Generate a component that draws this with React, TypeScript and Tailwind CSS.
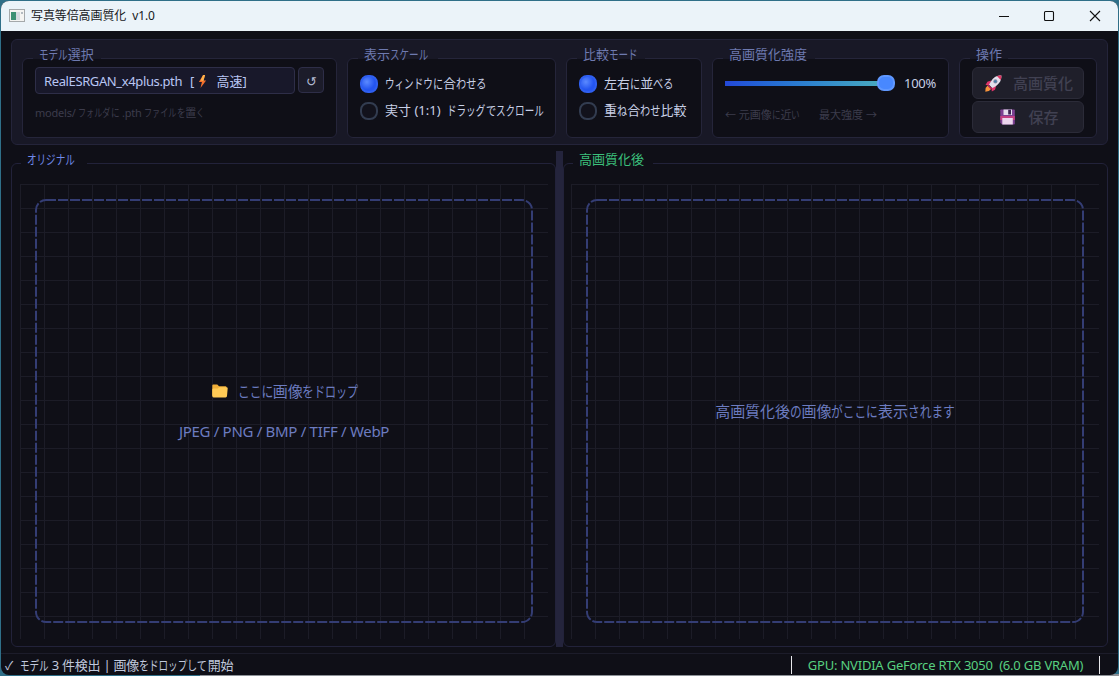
import type { ReactNode } from "react";

interface GroupProps {
  title: string;
  className: string;
  titleClassName: string;
  children: ReactNode;
}

// Kana are set narrower than kanji, as in the UI fonts of the desktop.
function Jp({ text }: { text: string }) {
  const runs = text.match(/[\u3040-\u309f]+|[\u30a0-\u30ff]+|[^\u3040-\u30ff]+/g) ?? [];
  return (
    <span className="whitespace-pre">
      {runs.map((run, i) => {
        const katakana = /^[\u30a0-\u30ff]/.test(run);
        if (!katakana && !/^[\u3040-\u309f]/.test(run)) {
          return <span key={i}>{run}</span>;
        }
        const ratio = katakana ? 0.735 : 0.78;
        return (
          <span key={i} className="inline-block" style={{ width: `${run.length * ratio}em` }}>
            <span className="inline-block origin-left tracking-normal" style={{ transform: `scaleX(${ratio})` }}>
              {run}
            </span>
          </span>
        );
      })}
    </span>
  );
}

function ToolGroup({ title, className, titleClassName, children }: GroupProps) {
  return (
    <div className={`relative h-[80px] shrink-0 rounded-md border border-[#25253a] bg-[#0f0f17] ${className}`}>
      <span
        className={`absolute -top-[14px] left-[10px] h-[20px] whitespace-nowrap bg-linear-to-b from-[#181826] from-70% to-[#0f0f17] to-70% pl-[6px] text-[13px] leading-[19px] text-[#6e7ab0] ${titleClassName}`}
      >
        <Jp text={title} />
      </span>
      {children}
    </div>
  );
}

function RadioRow({ label, checked }: { label: string; checked?: boolean }) {
  return (
    <div className="flex h-[18px] items-center gap-[7px]">
      <span
        className={`h-[18px] w-[18px] shrink-0 rounded-[8px] border-2 ${
          checked
            ? "border-[#2f5ff0] bg-radial-[at_35%_35%] from-[#5b8aff] to-[#2455f0] to-60%"
            : "border-[#323c50] bg-[#12121c]"
        }`}
      />
      <span className="whitespace-nowrap text-[13px] text-[#c8d0e6]">
        <Jp text={label} />
      </span>
    </div>
  );
}

function AppIcon() {
  return (
    <svg width="16" height="14" viewBox="0 0 16 14">
      <rect x="0.5" y="0.5" width="15" height="12" fill="#f4f4f2" stroke="#a5a9ab" />
      <rect x="2" y="3" width="5" height="8" fill="#3d9174" />
      <rect x="7" y="3" width="4" height="8" fill="#d5dbe0" />
      <rect x="12" y="3" width="2" height="2" fill="#b3bac0" />
    </svg>
  );
}

function BoltIcon() {
  return (
    <svg width="9" height="13" viewBox="0 0 8 13" className="ml-[4px] shrink-0">
      <path d="M4.6 0 0.4 7h3L2 13l5.6-7.6H4.7L6.6 0Z" fill="#f4702c" />
      <path d="M4.6 0 2 5.5l3 .4L6.6 0Z" fill="#ffb14a" />
    </svg>
  );
}

function RocketIcon() {
  return (
    <svg width="17" height="17" viewBox="0 0 17 17">
      <path d="M6.2 5.6 2.4 6.8.5 10l4 .2Z" fill="#e0346b" />
      <path d="M11.2 10.7 10 14.8 6.8 16.4l-.2-4Z" fill="#e0346b" />
      <path d="M2.7 10.6.6 13.1.3 16.7l3.6-.6 2.5-2.3Z" fill="#f7933b" />
      <path d="M16.4.5C11 .4 7.4 2.6 4 9.8l3.2 3.3C13.6 10 16.6 6.4 16.4.5Z" fill="#e3dfeb" />
      <path d="M16.4.5c-2-.1-3.3.1-4.5.6l3.8 3.8c.5-1.3.7-2.6.7-4.4Z" fill="#df3864" />
      <path d="m3.5 9.8 3.7 3.7-1.2.9-3.3-3.3Z" fill="#b5255b" />
      <circle cx="10.4" cy="6.4" r="2.1" fill="#8a8aa5" />
      <circle cx="10.4" cy="6.4" r="1.2" fill="#3f80ac" />
    </svg>
  );
}

function FloppyIcon() {
  return (
    <svg width="15" height="16" viewBox="0 0 15 16">
      <path d="M1 .5h13q.8 0 .8.8v13.4q0 .8-.8.8H2L.3 13.8V1.3Q.3.5 1 .5Z" fill="#7d3f92" />
      <path d="M.3 7h14.5v4H.3Z" fill="#c23f83" />
      <path d="M3.5.5h8.5v5.5H3.5Z" fill="#e5dced" />
      <path d="M8.2 0.8h2.8v4.6H8.200Z" fill="#3a2350" />
      <path d="M2.3 9h10.5v6.5H2.3Z" fill="#ecd6ee" />
    </svg>
  );
}

function FolderIcon() {
  return (
    <svg width="16" height="14" viewBox="0 0 16 14">
      <path d="M1.3.6h4l1.7 1.7h6.5q1 0 1 1v8.5H.3V1.6q0-1 1-1Z" fill="#f0ae38" />
      <path d="M1.5 4.5h4.2l1.5-1.3h7.3q1.2 0 1.2 1.1l-.7 7.8q-.1 1.3-1.4 1.3H1.5Q.3 13.4.3 12V5.6q0-1.1 1.2-1.1Z" fill="#ffca55" />
    </svg>
  );
}

function TitleBar() {
  return (
    <header className="flex h-[30px] shrink-0 items-center bg-[#ebf3f9] pl-2">
      <AppIcon />
      <span className="ml-[6px] whitespace-pre text-[12px] tracking-[-0.1px] text-[#16181c]">写真等倍高画質化  v1.0</span>
      <svg width="102" height="12" viewBox="0 0 102 12" className="ml-auto mr-[17px]" fill="none" stroke="#111" strokeWidth="1.1">
        <path d="M0 6.5h10" />
        <rect x="45.5" y="1.5" width="9" height="9" rx="1" />
        <path d="m91 1 10 10M101 1 91 11" />
      </svg>
    </header>
  );
}

function Toolbar() {
  return (
    <section className="flex h-[106px] shrink-0 gap-[10px] rounded-md border border-[#24243a] bg-[#181826] px-[10px] pt-[18px]">
      <ToolGroup title="モデル選択" className="w-[315px] px-3 pt-[8px]" titleClassName="w-[68px]">
        <div className="flex gap-[3px]">
          <div className="flex h-[27px] w-[260px] items-center whitespace-pre rounded border border-[#2e2e48] bg-[#18182a] pt-[2px] pl-2 text-[13px] text-[#b8c6f4]">
            <span className="tracking-[-0.38px]">RealESRGAN_x4plus.pth</span>
            <span className="ml-[8px]">[</span>
            <BoltIcon />
            <span className="ml-[9px]">高速]</span>
          </div>
          <div className="flex h-[26px] w-[26px] items-center justify-center rounded border border-[#2e2e48] bg-[#1c1c2a] pt-1 text-[13px] text-[#b0b8d0]">
            ↺
          </div>
        </div>
        <p className="mt-[10px] whitespace-nowrap text-[11px] leading-[18px] tracking-[-0.2px] text-[#3c3c4c]">
          <Jp text="models/ フォルダに .pth ファイルを置く" />
        </p>
      </ToolGroup>

      <ToolGroup title="表示スケール" className="w-[209px] px-3 pt-[16px]" titleClassName="w-[80px]">
        <div className="flex flex-col gap-[9px]">
          <RadioRow label="ウィンドウに合わせる" checked />
          <RadioRow label="実寸 (1:1)  ドラッグでスクロール" />
        </div>
      </ToolGroup>

      <ToolGroup title="比較モード" className="w-[136px] px-3 pt-[16px]" titleClassName="w-[68px]">
        <div className="flex flex-col gap-[9px]">
          <RadioRow label="左右に並べる" checked />
          <RadioRow label="重ね合わせ比較" />
        </div>
      </ToolGroup>

      <ToolGroup title="高画質化強度" className="w-[237px] px-3 pt-[14px]" titleClassName="w-[92px]">
        <div className="flex h-[20px] items-center">
          <div className="h-[5px] w-[153px] bg-linear-to-r from-[#2448d8] to-[#48a8c0]" />
          <div className="-ml-px h-[16px] w-[18px] rounded-[7px] border-2 border-[#6098ff] bg-[#4888ff]" />
          <span className="ml-[9px] pt-px text-[13px] tracking-[-0.3px] text-[#c8d0e6]">100%</span>
        </div>
        <p className="mt-[13px] whitespace-nowrap text-[11px] leading-[18px] text-[#3c3c4c]">
          <Jp text="← 元画像に近い" />
          <span className="ml-[19px]">最大強度 →</span>
        </p>
      </ToolGroup>

      <ToolGroup title="操作" className="w-[138px] px-3 pt-[8px]" titleClassName="w-[38px]">
        <div className="flex flex-col gap-[2px]">
          <div className="flex h-[32px] w-[112px] items-center justify-center gap-[11px] rounded-md border border-[#2b2b38] bg-[#1f1f2a] pl-[2px] text-[15px] font-medium text-[#414152]">
            <RocketIcon />
            高画質化
          </div>
          <div className="flex h-[32px] w-[112px] items-center justify-center gap-[13px] rounded-md border border-[#2b2b38] bg-[#1f1f2a] pl-[3px] text-[15px] font-medium text-[#414152]">
            <FloppyIcon />
            保存
          </div>
        </div>
      </ToolGroup>
    </section>
  );
}

interface ImagePanelProps {
  title: string;
  titleClassName: string;
  className: string;
  children: ReactNode;
}

function ImagePanel({ title, titleClassName, className, children }: ImagePanelProps) {
  return (
    <section className={`relative mt-[12px] h-[484px] shrink-0 rounded-md border border-[#22223a] pt-[20px] ${className}`}>
      <span className={`absolute -top-[14px] left-[9px] h-[20px] whitespace-nowrap bg-[#0f0f17] pl-[6px] text-[13px] leading-[19px] ${titleClassName}`}>
        <Jp text={title} />
      </span>
      <div className="relative h-[455px] w-[528px] bg-[linear-gradient(to_right,#1c1c27_1px,transparent_1px),linear-gradient(to_bottom,#1c1c27_1px,transparent_1px)] bg-size-[24px_24px]">
        <svg width="528" height="455" className="absolute left-0 top-0" fill="none">
          <rect
            x="16"
            y="16"
            width="496"
            height="422"
            rx="10"
            stroke="#343d74"
            strokeWidth="2"
            strokeDasharray="10 2"
          />
        </svg>
        <div className="relative flex h-full flex-col items-center whitespace-nowrap text-[15px] leading-[20px] text-[#6c7cc0]">
          {children}
        </div>
      </div>
    </section>
  );
}

function StatusBar() {
  return (
    <footer className="flex h-[22px] shrink-0 items-center border-t border-[#1c1c2a] pl-[4px] text-[13px] text-[#c0c8dc]">
      <span className="flex items-center gap-[5px] whitespace-nowrap pt-[2px] tracking-[-0.25px]">
        <span className="w-[10px] text-[12px]">✓</span>
        <Jp text="モデル 3 件検出 | 画像をドロップして開始" />
      </span>
      <div className="ml-auto mr-[18px] flex h-[18px] w-[309px] items-center justify-center whitespace-pre border-x border-[#e8e8ec] pt-[2px] tracking-[-0.21px] text-[#58d080]">
        GPU: NVIDIA GeForce RTX 3050  (6.0 GB VRAM)
      </div>
    </footer>
  );
}

export default function App() {
  return (
    <div className='h-[676px] w-[1119px] overflow-hidden bg-linear-to-r from-[#2f6f88] from-[200px] to-[#8d9298] to-[200px] font-["Noto_Sans","Noto_Sans_CJK_JP",sans-serif]'>
      <div className="h-[674px] bg-[#2f6f88] pl-px pt-px">
        <div className="flex h-[674px] w-[1117px] flex-col overflow-hidden rounded-lg bg-[#0f0f17]">
          <TitleBar />
          <main className="flex grow flex-col px-[10px] pt-2">
            <Toolbar />
            <div className="mt-[6px] flex">
              <ImagePanel
                title="オリジナル"
                titleClassName="w-[66px] text-[#6f8ae8]"
                className="w-[545px] pl-[8px]"
              >
                <div className="mt-[197px] flex items-center gap-[10px] pl-[2px] tracking-[-0.2px]">
                  <FolderIcon />
                  <Jp text="ここに画像をドロップ" />
                </div>
                <div className="mt-[20px] tracking-[-0.3px]">JPEG / PNG / BMP / TIFF / WebP</div>
              </ImagePanel>
              <div className="h-[496px] w-[7px] shrink-0 bg-[#24243c]" />
              <ImagePanel
                title="高画質化後"
                titleClassName="w-[80px] text-[#3cc07c]"
                className="w-[545px] pl-[7px]"
              >
                <div className="mt-[217px] tracking-[-0.1px]">
                  <Jp text="高画質化後の画像がここに表示されます" />
                </div>
              </ImagePanel>
            </div>
          </main>
          <StatusBar />
        </div>
      </div>
    </div>
  );
}
